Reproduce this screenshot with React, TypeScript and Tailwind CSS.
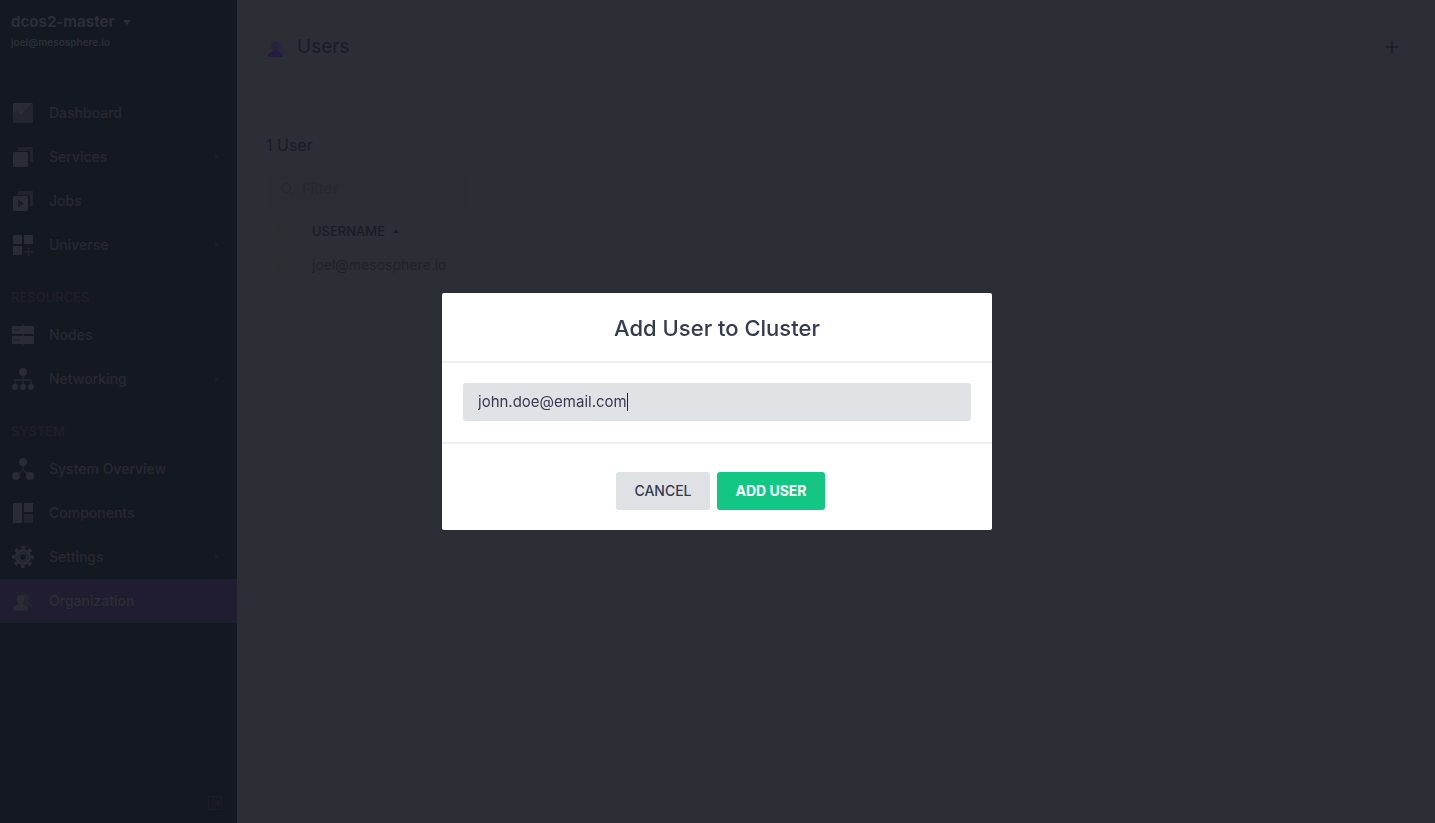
import React, { useState } from "react";
import type { ReactNode } from "react";

function Glyph({ children }: { children: ReactNode }) {
  return (
    <svg width="22" height="22" viewBox="0 0 22 22" fill="currentColor" aria-hidden="true" className="shrink-0 text-[#292c34]">
      {children}
    </svg>
  );
}

const icons: Record<string, ReactNode> = {
  dashboard: (
    <>
      <rect x="1" y="1" width="20" height="20" rx="1" opacity="0.7" />
      <path d="M1 1h19L9 14 4 9l-3 3z" />
      <path d="M4 9l5 5L20 2" fill="none" stroke="#20232a" strokeWidth="1" />
    </>
  ),
  services: (
    <>
      <path d="M6 1h15v15h-3V7a2 2 0 0 0-2-2H6z" opacity="0.55" />
      <rect x="1" y="6" width="15" height="15" rx="1.5" />
    </>
  ),
  jobs: (
    <>
      <path d="M6 1h15v15h-3V7a2 2 0 0 0-2-2H6z" opacity="0.55" />
      <rect x="1" y="6" width="15" height="15" rx="1.5" />
      <path d="M6 9.500v8l6-4z" fill="#191d25" />
    </>
  ),
  universe: (
    <>
      <rect x="1" y="1" width="9" height="9" rx="0.500" />
      <rect x="12" y="1" width="9" height="9" rx="0.500" />
      <rect x="1" y="12" width="9" height="9" rx="0.500" />
      <path d="M16 13.500h1.500V17H21v1.500h-3.500V22H16v-3.500h-3.500V17H16z" opacity="0.7" />
    </>
  ),
  nodes: (
    <>
      <path d="M10 0h2v22h-2z" opacity="0.5" />
      <rect x="0" y="2" width="22" height="8" rx="0.500" />
      <rect x="0" y="12" width="22" height="8" rx="0.500" />
      <path d="M2 5h1.500v1.500H2zM5 5h1.500v1.500H5zM2 15h1.500v1.500H2zM5 15h1.500v1.500H5z" fill="#1b1f27" />
    </>
  ),
  networking: (
    <>
      <circle cx="11" cy="4" r="4" />
      <path d="M11 8v8M3 17v-5h16v5" fill="none" stroke="currentColor" strokeWidth="1.300" opacity="0.8" />
      <circle cx="3" cy="19" r="3" />
      <circle cx="11" cy="19" r="3" />
      <circle cx="19" cy="19" r="3" />
    </>
  ),
  overview: (
    <>
      <circle cx="11" cy="4" r="4" />
      <path d="M11 7v5l-5 4M11 12l5 4" fill="none" stroke="currentColor" strokeWidth="1.300" opacity="0.8" />
      <circle cx="4" cy="18" r="4" />
      <circle cx="18" cy="18" r="4" />
    </>
  ),
  components: (
    <>
      <rect x="1" y="1" width="9" height="20" />
      <rect x="12" y="1" width="9" height="9" />
      <rect x="12" y="12" width="9" height="9" opacity="0.65" />
    </>
  ),
  settings: (
    <>
      <circle cx="11" cy="11" r="5.500" fill="none" stroke="currentColor" strokeWidth="5" />
      <circle cx="11" cy="11" r="9.500" fill="none" stroke="currentColor" strokeWidth="3" strokeDasharray="3.730 3.730" strokeDashoffset="1.860" />
      <circle cx="11" cy="11" r="5" fill="none" stroke="#1b1f27" strokeWidth="0.800" />
    </>
  ),
  organization: (
    <>
      <path d="M9 5a4.500 4.500 0 0 1 8 2c0 2-.5 3-1.500 4.200L20 14v2.500h-5l-4-4z" opacity="0.6" />
      <circle cx="8.500" cy="9" r="4" />
      <path d="M6.500 12h4v2l5.500 3v3.500H1V17l5.500-3z" />
    </>
  ),
};

type Item = { label: string; icon: string; more?: boolean; active?: boolean };

const groups: { title?: string; items: Item[] }[] = [
  {
    items: [
      { label: "Dashboard", icon: "dashboard" },
      { label: "Services", icon: "services", more: true },
      { label: "Jobs", icon: "jobs" },
      { label: "Universe", icon: "universe", more: true },
    ],
  },
  {
    title: "RESOURCES",
    items: [
      { label: "Nodes", icon: "nodes" },
      { label: "Networking", icon: "networking", more: true },
    ],
  },
  {
    title: "SYSTEM",
    items: [
      { label: "System Overview", icon: "overview" },
      { label: "Components", icon: "components" },
      { label: "Settings", icon: "settings", more: true },
      { label: "Organization", icon: "organization", active: true },
    ],
  },
];

function Sidebar() {
  return (
    <aside className="flex w-[237px] shrink-0 flex-col bg-[#141921] text-[#2b2e36]">
      <header className="h-[91px] px-[11px] pt-3">
        <button type="button" className="flex items-center gap-2 text-[15px] leading-5 font-bold">
          dcos2-master
          <svg width="8" height="5" viewBox="0 0 8 5" fill="currentColor" aria-hidden="true">
            <path d="M0 0h8L4 5z" />
          </svg>
        </button>
        <p className="text-[10px] leading-5 font-semibold">joel@mesosphere.io</p>
      </header>
      <nav className="flex-1">
        {groups.map((group, i) => (
          <section key={i}>
            {group.title && (
              <h2 className="h-[46px] px-[11px] pt-5 text-[13px] leading-5 font-medium text-[#211e2a]">{group.title}</h2>
            )}
            <ul>
              {group.items.map((item) => (
                <li key={item.label}>
                  <a
                    href="#"
                    className={
                      item.active
                        ? "flex h-11 items-center gap-[15px] bg-[#201d30] pr-[18px] pl-3 text-sm font-medium text-[#2d2e37]"
                        : "flex h-11 items-center gap-[15px] pr-[18px] pl-3 text-sm font-medium text-[#272832]"
                    }
                  >
                    <Glyph>{icons[item.icon]}</Glyph>
                    <span className="flex-1">{item.label}</span>
                    {item.more && (
                      <svg width="4" height="6" viewBox="0 0 4 6" fill="#1b1c27" aria-hidden="true">
                        <path d="M0 0l4 3-4 3z" />
                      </svg>
                    )}
                  </a>
                </li>
              ))}
            </ul>
          </section>
        ))}
      </nav>
      <footer className="flex justify-end px-[15px] pb-[13px]">
        <button type="button" aria-label="Collapse sidebar" className="text-[#1b1c27]">
          <svg width="14" height="14" viewBox="0 0 14 14" fill="none" stroke="currentColor" aria-hidden="true">
            <path d="M.5.5h13v13H.5zM5 .5v13" />
            <path d="M11 4v6L7 7z" fill="currentColor" />
          </svg>
        </button>
      </footer>
    </aside>
  );
}

function UsersPage() {
  return (
    <main className="min-w-0 flex-1 bg-[#2c2e35] px-[29px] text-[#191c26]">
      <header className="flex h-[94px] items-center justify-between pr-2">
        <h1 className="flex items-center gap-2.5 text-[19px] leading-7">
          <svg width="21" height="24" viewBox="0 0 21 24" aria-hidden="true">
            <path d="M9.500 9a4.500 4.500 0 0 1 7.500 2c0 2-1 3.500-1 3.500l4 3V19h-6z" fill="#2b283c" />
            <circle cx="9.500" cy="11" r="4.200" fill="#28233c" />
            <path d="M7.500 14h4v2l5 3v3H2v-3l5.500-3z" fill="#251d3d" />
          </svg>
          Users
        </h1>
        <button type="button" aria-label="Add user">
          <svg width="12" height="12" viewBox="0 0 12 12" stroke="currentColor" strokeWidth="1.500" aria-hidden="true">
            <path d="M6 0v12M0 6h12" />
          </svg>
        </button>
      </header>
      <h2 className="pt-[39px] text-base leading-6">1 User</h2>
      <label className="mt-[13px] flex h-[38px] w-[204px] items-center gap-2 rounded-sm bg-[#2b2d34] px-3.5 text-[#26282f]">
        <svg width="14" height="14" viewBox="0 0 14 14" fill="none" stroke="currentColor" aria-hidden="true" className="shrink-0">
          <circle cx="6" cy="6" r="4.500" />
          <path d="M9.500 9.500l4 4" />
        </svg>
        <input
          type="text"
          aria-label="Filter users"
          placeholder="Filter"
          className="w-full min-w-0 bg-transparent text-[15px] leading-6 font-medium outline-none placeholder:text-[#26282f]"
        />
      </label>
      <table className="mt-1.5 w-full text-left">
        <thead>
          <tr className="h-[34px]">
            <th className="w-[46px] pl-2">
              <input type="checkbox" aria-label="Select all users" className="block size-[14px] appearance-none rounded-xs bg-[#2b2d32]" />
            </th>
            <th className="text-[13px] leading-5 font-medium">
              <button type="button" className="flex items-center gap-2">
                USERNAME
                <svg width="6" height="4" viewBox="0 0 6 4" fill="currentColor" aria-hidden="true">
                  <path d="M0 4h6L3 0z" />
                </svg>
              </button>
            </th>
          </tr>
        </thead>
        <tbody>
          <tr className="h-[34px]">
            <td className="pl-2">
              <input type="checkbox" aria-label="Select joel@mesosphere.io" className="block size-[14px] appearance-none rounded-xs bg-[#2b2d32]" />
            </td>
            <td className="text-sm leading-5 text-[#1f2128]">joel@mesosphere.io</td>
          </tr>
        </tbody>
      </table>
    </main>
  );
}

function AddUserDialog() {
  const [email, setEmail] = useState("john.doe@email.com");
  return (
    <div className="fixed inset-0 flex items-center justify-center pr-px">
      <form
        role="dialog"
        aria-labelledby="dialog-title"
        onSubmit={(e) => e.preventDefault()}
        className="w-[550px] max-w-full overflow-hidden rounded-xs bg-white text-[#343b50]"
      >
        <header className="border-b-2 border-[#efeff0] pt-[21px] pb-[19px] text-center">
          <h2 id="dialog-title" className="text-[22px] leading-7 font-medium">
            Add User to Cluster
          </h2>
        </header>
        <div className="border-b-2 border-[#efeff0] px-[21px] pt-5 pb-[21px]">
          <label className="flex h-[38px] items-center rounded-[3px] bg-[#e1e2e6] px-[15px]">
            <input
              type="text"
              aria-label="Email address"
              value={email}
              onChange={(e) => setEmail(e.target.value)}
              className="field-sizing-content max-w-full bg-transparent text-[15px] leading-6 caret-transparent outline-none"
            />
            <span className="h-[18px] w-px shrink-0 bg-[#20242e]" />
          </label>
        </div>
        <footer className="flex justify-center pt-7 pb-5 text-sm">
          <button type="button" className="ml-[7px] h-[38px] w-[94px] rounded-[3px] bg-[#e0e1e5] font-medium">
            CANCEL
          </button>
          <button type="submit" className="ml-[7px] h-[38px] w-[108px] rounded-[3px] bg-[#14c684] font-bold text-white">
            ADD USER
          </button>
        </footer>
      </form>
    </div>
  );
}

export default function App() {
  return (
    <div className="flex min-h-screen font-['Inter','Liberation_Sans',sans-serif]">
      <Sidebar />
      <UsersPage />
      <AddUserDialog />
    </div>
  );
}
